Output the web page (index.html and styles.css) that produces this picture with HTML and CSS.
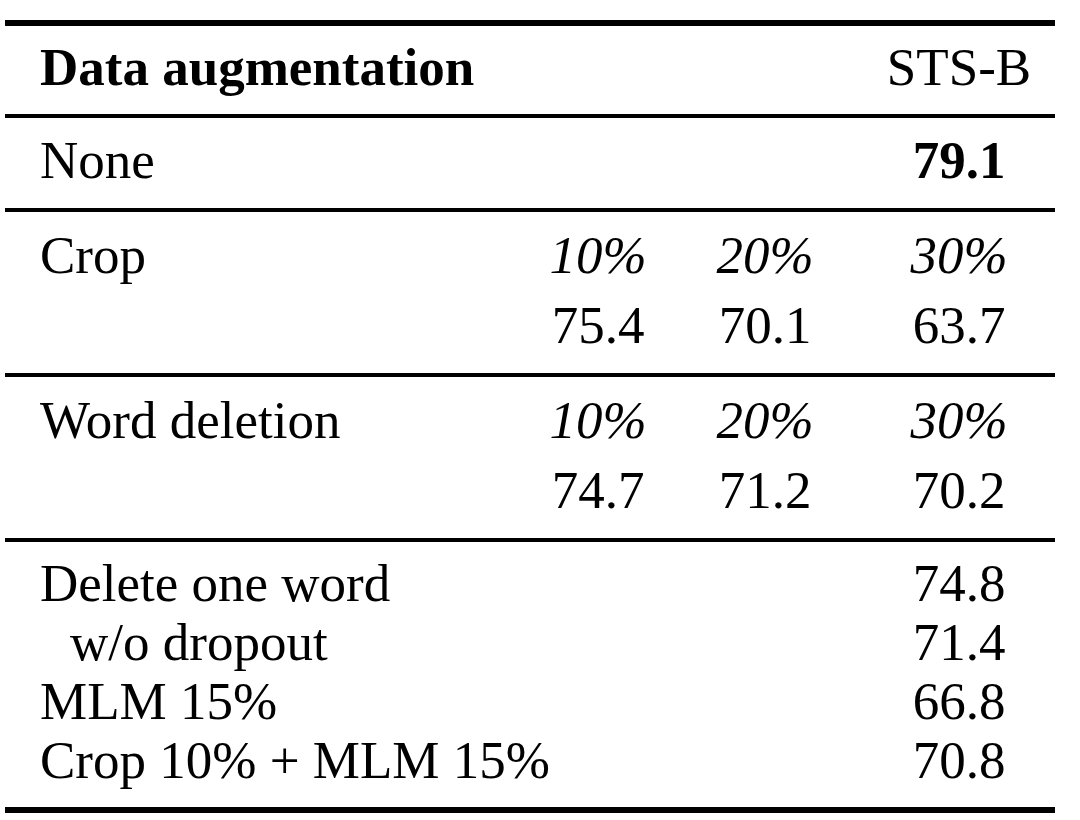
FILE: index.html
```html
<!DOCTYPE html>
<html lang="en">
<head>
<meta charset="utf-8">
<title>Data augmentation – STS-B</title>
<link rel="stylesheet" href="styles.css">
</head>
<body>
<div class="table">
  <div class="rule heavy"></div>
  <div class="group head">
    <div class="row">
      <div class="label span3 bold">Data augmentation</div>
      <div class="cell">STS-B</div>
    </div>
  </div>
  <div class="rule"></div>
  <div class="group single">
    <div class="row">
      <div class="label span3">None</div>
      <div class="cell bold">79.1</div>
    </div>
  </div>
  <div class="rule"></div>
  <div class="group sweep">
    <div class="row tall">
      <div class="label">Crop</div>
      <div class="cell it">10%</div>
      <div class="cell it">20%</div>
      <div class="cell it">30%</div>
    </div>
    <div class="row tall">
      <div class="label"></div>
      <div class="cell">75.4</div>
      <div class="cell">70.1</div>
      <div class="cell">63.7</div>
    </div>
  </div>
  <div class="rule"></div>
  <div class="group sweep">
    <div class="row tall">
      <div class="label">Word deletion</div>
      <div class="cell it">10%</div>
      <div class="cell it">20%</div>
      <div class="cell it">30%</div>
    </div>
    <div class="row tall">
      <div class="label"></div>
      <div class="cell">74.7</div>
      <div class="cell">71.2</div>
      <div class="cell">70.2</div>
    </div>
  </div>
  <div class="rule"></div>
  <div class="group list">
    <div class="row">
      <div class="label span3">Delete one word</div>
      <div class="cell">74.8</div>
    </div>
    <div class="row">
      <div class="label span3 indent">w/o dropout</div>
      <div class="cell">71.4</div>
    </div>
    <div class="row">
      <div class="label span3">MLM 15%</div>
      <div class="cell">66.8</div>
    </div>
    <div class="row">
      <div class="label span3">Crop 10% + MLM 15%</div>
      <div class="cell">70.8</div>
    </div>
  </div>
  <div class="rule heavy"></div>
</div>
</body>
</html>
```

FILE: styles.css
```css
html, body {
  margin: 0;
  padding: 0;
  background: #ffffff;
}

body {
  color: #000000;
  font-family: "Liberation Serif", "Times New Roman", serif;
  font-size: 53px;
}

.table {
  width: 1050px;
  margin: 20px 0 0 5px;
  display: flex;
  flex-direction: column;
}

.rule {
  height: 4px;
  background: #000000;
}

.rule.heavy {
  height: 6px;
}

.group {
  display: flex;
  flex-direction: column;
}

.group.head {
  padding: 11px 0 17px 0;
}

.group.single {
  padding: 12px 0 18px 0;
}

.group.sweep {
  padding: 8px 0 13px 0;
}

.group.list {
  padding: 12px 0 17px 0;
}

.row {
  display: grid;
  grid-template-columns: 1fr 138px 196px 192px;
  height: 60px;
  line-height: 60px;
  white-space: nowrap;
}

.group.list .row {
  height: 59px;
  line-height: 59px;
}

.row.tall {
  height: 70px;
  line-height: 70px;
}

.label {
  padding-left: 35px;
  text-align: left;
}

.label.span3 {
  grid-column: 1 / 4;
}

.label.indent {
  padding-left: 65px;
}

.cell {
  text-align: center;
}

.bold {
  font-weight: 700;
}

.it {
  font-style: italic;
}
```
